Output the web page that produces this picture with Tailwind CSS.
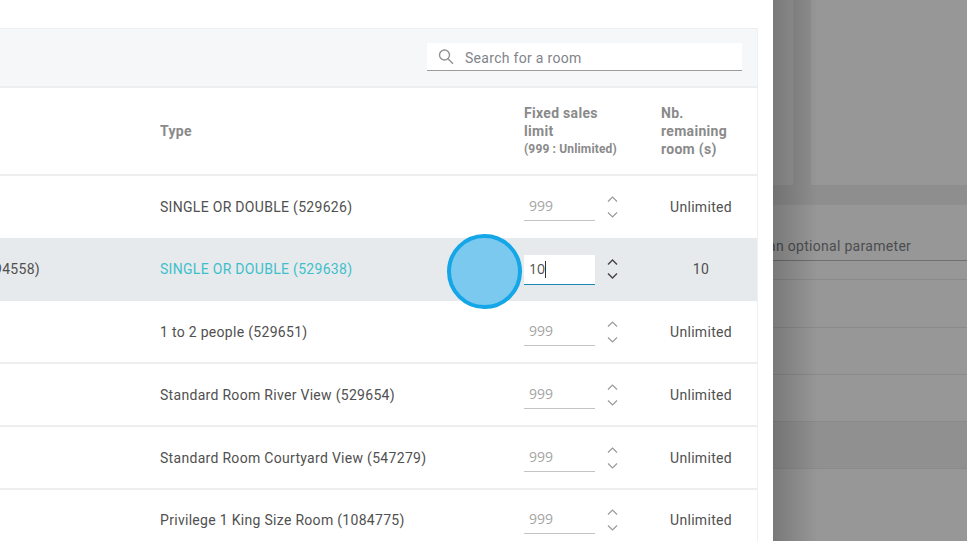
<!DOCTYPE html>
<html>
<head>
    <meta charset="utf-8">
    <script src="https://cdn.jsdelivr.net/npm/@tailwindcss/browser@4"></script>
    <title>Rooms</title>
</head>
<body class="bg-[#979797] font-['Roboto',sans-serif] text-sm tracking-[0.3px] text-[#505050]">
<div class="relative flex w-[967px] h-[541px] overflow-hidden">

    <!-- white panel -->
    <main class="w-[773px] shrink-0 h-full bg-white pt-[28px] pr-[15px] relative z-10">
        <div class="border-r border-[#eef0f2] h-full">
            <div class="h-[60px] bg-[#f6f7f9] border-t border-b-2 border-[#eceef0] flex items-center justify-end pr-[15px]">
                <div class="w-[315px] h-[28px] bg-white border-b border-[#9b9b9b] flex items-center mt-[-1px]">
                    <svg class="w-[16px] h-[16px] ml-[11px] text-[#8f9396]" viewBox="0 0 16 16" fill="none" stroke="currentColor" stroke-width="1.4">
                        <circle cx="6.500" cy="6" r="5"/>
                        <path d="M10 9.700l5 5"/>
                    </svg>
                    <span class="ml-[11px] text-[#80848a] mt-[3px]">Search for a room</span>
                </div>
            </div>

            <div class="h-[88px] flex items-center border-b-2 border-[#eceef0] font-bold text-[#8a8a8a] leading-[18px]">
                <div class="w-[160px]"></div>
                <div class="w-[364px]">Type</div>
                <div class="w-[137px]">
                    <div>Fixed sales<br>limit</div>
                    <div class="text-[12px] tracking-[0.15px] leading-[18px]">(999 : Unlimited)</div>
                </div>
                <div class="w-[90px]">Nb.<br>remaining<br>room (s)</div>
            </div>

            <div class="h-[62px] flex items-center">
                <div class="w-[160px]"></div>
                <div class="w-[364px]">SINGLE OR DOUBLE (529626)</div>
                <div class="w-[71px] h-[28px] border-b border-[#c4c4c4] font-['Open_Sans',sans-serif] tracking-normal text-[#a5a5a5] pl-[5px] leading-[26px]">999</div>
                <svg class="w-[12px] h-[28px] ml-[12px] text-[#9a9a9a]" viewBox="0 0 12 28" fill="none" stroke="currentColor" stroke-width="1.2"><path d="M1 8.500l4.500-4.500L10 8.500M1 19.500l4.500 4.500 4.500-4.500"/></svg>
                <div class="w-[90px] ml-[37px] text-center">Unlimited</div>
            </div>

            <div class="h-[63px] flex items-center bg-[#e7eaec] pb-[1px]">
                <div class="w-[160px] flex justify-end pr-[120px] whitespace-nowrap">Deluxe (1094558)</div>
                <div class="w-[364px] text-[#3fbfcb]">SINGLE OR DOUBLE (529638)</div>
                <div class="w-[71px] h-[30px] mt-[1px] bg-white border-b border-[#1d87b5] font-['Open_Sans',sans-serif] tracking-normal pl-[5px] leading-[28px] flex"><span>10</span><span class="w-px h-[17px] bg-[#333] mt-[6px]"></span></div>
                <svg class="w-[12px] h-[28px] ml-[12px] text-[#444]" viewBox="0 0 12 28" fill="none" stroke="currentColor" stroke-width="1.4"><path d="M1 9.500l4.500-4.500L10 9.500M1 18.500l4.500 4.500 4.500-4.500"/></svg>
                <div class="w-[90px] ml-[37px] text-center">10</div>
            </div>

            <div class="h-[63px] flex items-center border-b-2 border-[#eceef0] pt-[1px]">
                <div class="w-[160px]"></div>
                <div class="w-[364px]">1 to 2 people (529651)</div>
                <div class="w-[71px] h-[28px] border-b border-[#c4c4c4] font-['Open_Sans',sans-serif] tracking-normal text-[#a5a5a5] pl-[5px] leading-[26px]">999</div>
                <svg class="w-[12px] h-[28px] ml-[12px] text-[#9a9a9a]" viewBox="0 0 12 28" fill="none" stroke="currentColor" stroke-width="1.2"><path d="M1 8.500l4.500-4.500L10 8.500M1 19.500l4.500 4.500 4.500-4.500"/></svg>
                <div class="w-[90px] ml-[37px] text-center">Unlimited</div>
            </div>

            <div class="h-[63px] flex items-center border-b-2 border-[#eceef0] pt-[1px]">
                <div class="w-[160px]"></div>
                <div class="w-[364px]">Standard Room River View (529654)</div>
                <div class="w-[71px] h-[28px] border-b border-[#c4c4c4] font-['Open_Sans',sans-serif] tracking-normal text-[#a5a5a5] pl-[5px] leading-[26px]">999</div>
                <svg class="w-[12px] h-[28px] ml-[12px] text-[#9a9a9a]" viewBox="0 0 12 28" fill="none" stroke="currentColor" stroke-width="1.2"><path d="M1 8.500l4.500-4.500L10 8.500M1 19.500l4.500 4.500 4.500-4.500"/></svg>
                <div class="w-[90px] ml-[37px] text-center">Unlimited</div>
            </div>

            <div class="h-[63px] flex items-center border-b-2 border-[#eceef0] pt-[1px]">
                <div class="w-[160px]"></div>
                <div class="w-[364px]">Standard Room Courtyard View (547279)</div>
                <div class="w-[71px] h-[28px] border-b border-[#c4c4c4] font-['Open_Sans',sans-serif] tracking-normal text-[#a5a5a5] pl-[5px] leading-[26px]">999</div>
                <svg class="w-[12px] h-[28px] ml-[12px] text-[#9a9a9a]" viewBox="0 0 12 28" fill="none" stroke="currentColor" stroke-width="1.2"><path d="M1 8.500l4.500-4.500L10 8.500M1 19.500l4.500 4.500 4.500-4.500"/></svg>
                <div class="w-[90px] ml-[37px] text-center">Unlimited</div>
            </div>

            <div class="h-[60px] flex items-center">
                <div class="w-[160px]"></div>
                <div class="w-[364px]">Privilege 1 King Size Room (1084775)</div>
                <div class="w-[71px] h-[28px] border-b border-[#c4c4c4] font-['Open_Sans',sans-serif] tracking-normal text-[#a5a5a5] pl-[5px] leading-[26px]">999</div>
                <svg class="w-[12px] h-[28px] ml-[12px] text-[#9a9a9a]" viewBox="0 0 12 28" fill="none" stroke="currentColor" stroke-width="1.2"><path d="M1 8.500l4.500-4.500L10 8.500M1 19.500l4.500 4.500 4.500-4.500"/></svg>
                <div class="w-[90px] ml-[37px] text-center">Unlimited</div>
            </div>
        </div>
    </main>

    <!-- dimmed page behind the panel -->
    <div class="relative flex-1 h-full flex flex-col overflow-hidden">
        <div class="h-[205px] shrink-0 bg-[#8e8e8e] flex gap-[18px] pb-[20px]">
            <div class="w-[20px] bg-[#979797]"></div>
            <div class="flex-1 bg-[#979797]"></div>
        </div>
        <div class="h-[56px] shrink-0 border-b border-[#6f6f6f] flex items-end pb-[4px] whitespace-nowrap text-[#4b4d50]">
            <span class="ml-[-5px]">an optional parameter</span>
        </div>
        <div class="h-[19px] shrink-0 border-b border-[#8a8a8a]"></div>
        <div class="h-[48px] shrink-0 border-b border-[#8a8a8a]"></div>
        <div class="h-[47px] shrink-0 border-b border-[#8a8a8a]"></div>
        <div class="h-[47px] shrink-0 border-b border-[#8a8a8a]"></div>
        <div class="h-[47px] shrink-0 border-b border-[#8a8a8a] bg-[#909090]"></div>
        <div class="flex-1"></div>
        <!-- panel shadow -->
        <div class="absolute inset-y-0 left-0 w-[45px] bg-gradient-to-r from-black/20 to-transparent"></div>
    </div>

    <!-- click marker -->
    <div class="absolute left-[447px] top-[234px] w-[75px] h-[75px] rounded-full bg-[#7cc9f0] border-[4px] border-[#14a6e6] z-20"></div>
</div>
</body>
</html>
